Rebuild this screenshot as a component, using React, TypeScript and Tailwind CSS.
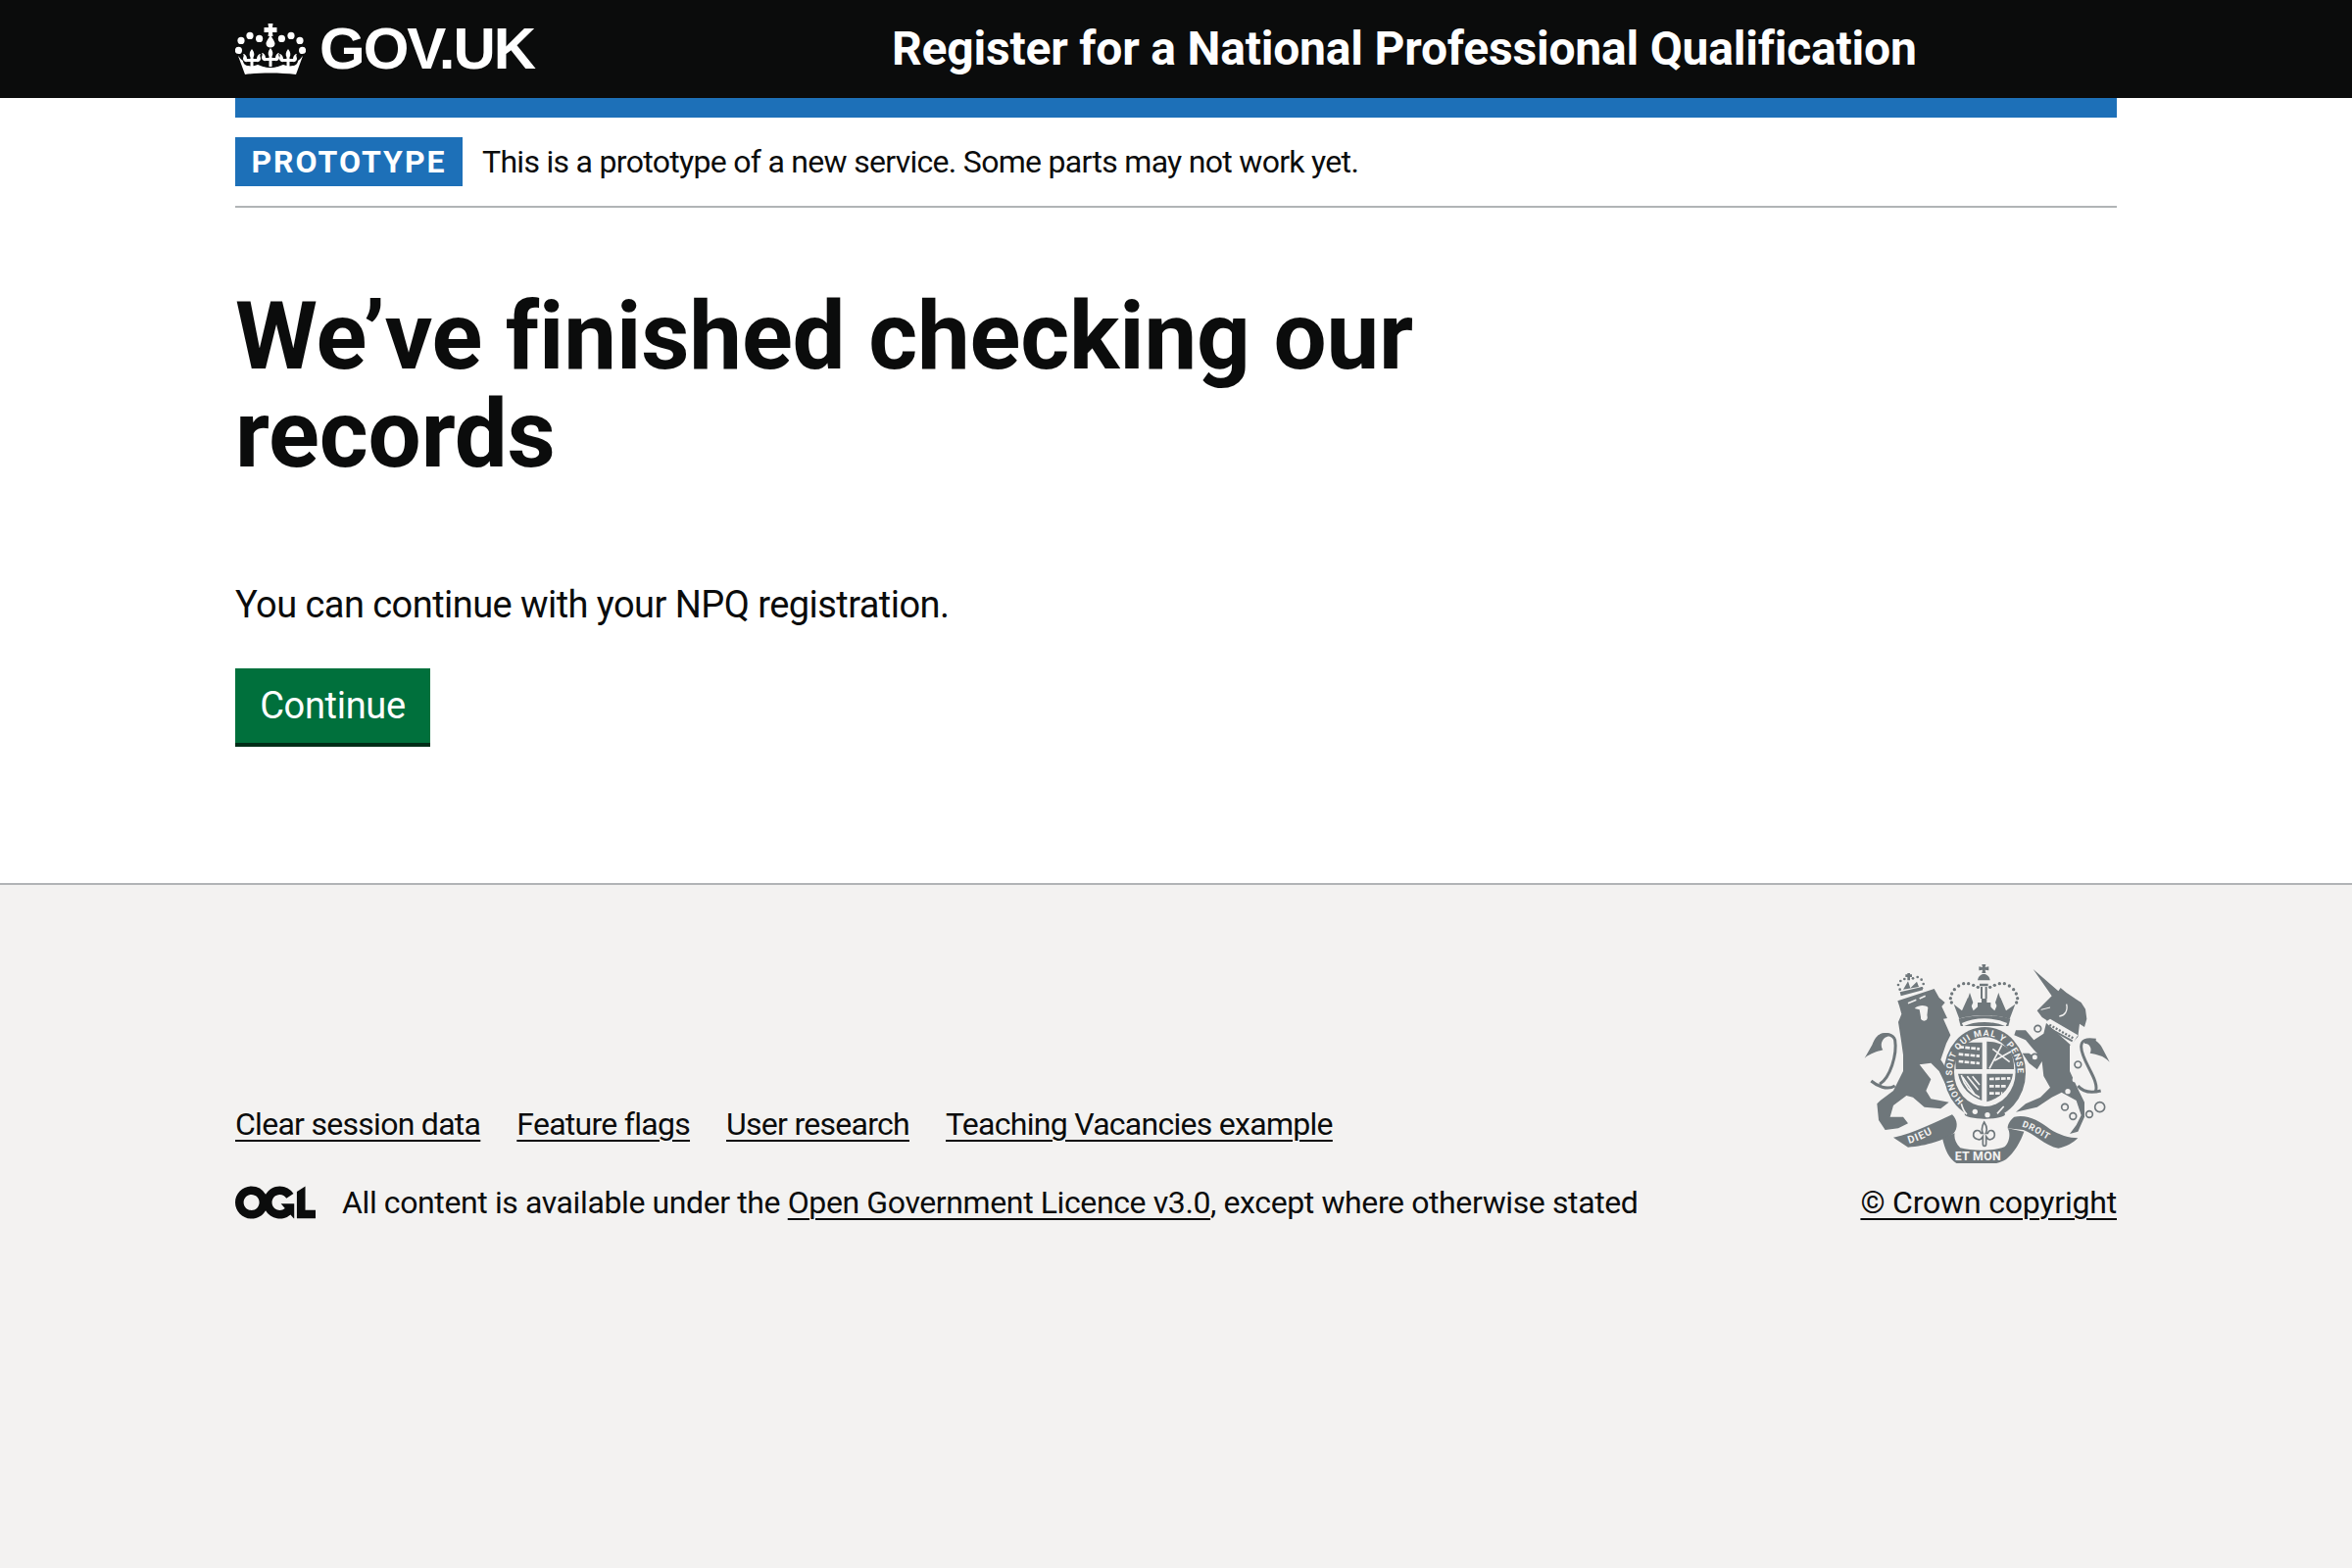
import React from 'react';

const Fleur = ({ x, y }: { x: number; y: number }) => (
  <path
    transform={`translate(${x} ${y})`}
    d="M0 -11 C2.5 -8 3 -5 1.5 -2.5 L1.5 -1 L5 -1 C5 -4 7 -6 9 -6 C7.5 -4 9 -3 9 -1 C9 1.5 6.5 2.5 4.5 2 L1.5 2 L1.5 8 L-1.5 8 L-1.5 2 L-4.5 2 C-6.5 2.5 -9 1.5 -9 -1 C-9 -3 -7.5 -4 -9 -6 C-7 -6 -5 -4 -5 -1 L-1.5 -1 L-1.5 -2.5 C-3 -5 -2.5 -8 0 -11 Z"
  />
);

const CrownLogo = () => (
  <svg width="72" height="52" viewBox="0 0 72 52" fill="currentColor" aria-hidden="true">
    {[[3.4, 27.4], [6, 17.4], [15, 12.4], [24.6, 15.4], [47.4, 15.4], [57, 12.4], [66, 17.4], [68.6, 27.4]].map(([cx, cy]) => (
      <circle key={`${cx}-${cy}`} cx={cx} cy={cy} r="3.6" />
    ))}
    {/* cross and drop */}
    <path d="M33.5 0H38.5L38 4H42.5V9H38L38.5 13H33.5L34 9H29.5V4H34Z" />
    <path d="M36 11 C37 14 40.5 18 40.5 20.5 C40.5 23 38.5 24.5 36 24.5 C33.5 24.5 31.5 23 31.5 20.5 C31.5 18 35 14 36 11 Z" />
    <Fleur x={17} y={37} />
    <Fleur x={36} y={36} />
    <Fleur x={54} y={37} />
    {/* band */}
    <path d="M3 33 C5 35 6 37 8 38 C8 41 11 43 13 43 C17 44 20 43 23 42 C27 43 29 45 36 45 C43 45 45 43 49 42 C52 43 55 44 59 43 C61 43 64 41 64 38 C66 37 67 35 69 33 L62 52 C46 50 26 50 10 52 Z" />
  </svg>
);

const OglLogo = () => (
  <svg width="82" height="34" viewBox="0 0 483.2 195.7" fill="currentColor" aria-hidden="true">
    <path d="M421.5 142.8V.1l-50.7 32.3v161.1h112.4v-50.7zm-122.3-9.6A47.12 47.12 0 0 1 221 97.8c0-26 21.1-47.1 47.1-47.1 16.7 0 31.4 8.7 39.7 21.8l42.7-27.2A97.63 97.63 0 0 0 268.1 0c-36.5 0-68.3 20.1-85.1 49.7A98 98 0 0 0 97.8 0C43.9 0 0 43.9 0 97.8s43.9 97.8 97.8 97.8c36.5 0 68.3-20.1 85.1-49.7a97.76 97.76 0 0 0 149.6 25.4l19.4 22.2h3v-87.8h-80l24.3 27.5zM97.8 145c-26 0-47.1-21.1-47.1-47.1s21.1-47.1 47.1-47.1 47.2 21 47.2 47S123.8 145 97.8 145" />
  </svg>
);

// coat of arms, coordinates follow a 3x crop of the picture
const RoyalArms = () => {
  const dark = '#6f777b';
  const light = '#f3f2f1';
  return (
    <svg width="252" height="204" viewBox="70 70 756 612" fill={dark} aria-hidden="true">
      <defs>
        <path id="garter-ring" d="M375 491 A100 113 0 1 1 505 491" />
        <path id="ribbon-left" d="M208 622 C245 612 285 590 322 566" />
        <path id="ribbon-right" d="M553 570 C585 578 620 605 655 622" />
      </defs>

      {/* lion */}
      <path d="M173 185 L285 148 L300 175 L318 190 L308 202 L325 238 L313 240 L335 290 L322 315 L305 365 L340 420 L345 455 L325 452 L300 400 L275 375 L240 380 L275 425 L260 460 L275 485 L330 495 L305 515 L255 510 L220 480 L200 475 L160 505 L150 540 L190 540 L205 560 L175 575 L135 580 L115 550 L110 500 L120 490 L160 460 L190 400 L190 350 L183 300 L175 250 L185 225 L178 200 Z" />
      <path d="M205 192 L230 182 M258 170 L240 178" stroke={light} strokeWidth="5" fill="none" />
      <path d="M225 208 C240 196 258 198 266 205 L262 240 L245 240 L240 212 Z" fill={light} />
      <circle cx="254" cy="236" r="10" fill={light} />
      <path d="M165 445 C140 460 110 445 92 430" fill="none" stroke={dark} strokeWidth="9" />
      <path d="M118 440 C150 420 172 350 165 305 C160 285 130 283 115 295" fill="none" stroke={dark} strokeWidth="9" />
      <path d="M155 287 C125 275 105 290 95 320 L72 360 C90 345 110 340 128 335 C118 320 125 300 140 295 Z" />
      {/* lion crown */}
      {[[180, 150], [175, 136], [182, 124], [194, 118], [220, 116], [234, 112], [246, 120], [252, 133], [247, 146]].map(([cx, cy]) => (
        <circle key={`${cx}-${cy}`} cx={cx} cy={cy} r="4" />
      ))}
      <path d="M203 100 H211 V104 H217 V112 H211 V122 H203 V112 H197 V104 H203 Z" />
      <path d="M190 150 L205 125 L212 146 L232 126 L238 142 Z" />
      <path d="M180 158 L248 142 L250 152 L183 170 Z" />

      {/* unicorn */}
      <path d="M588 88 L665 155 L672 145 L690 160 L720 180 L735 190 L748 210 L752 240 L745 265 L730 255 L725 295 L700 322 L700 400 L725 455 L745 495 L745 540 L725 585 L700 592 L720 565 L735 535 L720 490 L675 465 L645 480 L600 510 L535 525 L565 500 L610 480 L640 450 L620 415 L615 370 L600 395 L575 375 L555 345 L575 345 L590 355 L600 345 L590 335 L565 305 L530 290 L535 275 L565 275 L590 305 L620 285 L630 245 L615 235 L600 215 L645 170 Z" />
      <path d="M690 195 C695 215 685 230 668 232" fill="none" stroke={light} strokeWidth="4" />
      <path d="M612 212 L640 205" stroke={light} strokeWidth="3" />
      <path d="M625 250 L640 240 L725 290 L705 322 Z" fill={light} />
      <path d="M638 258 L712 300" stroke={dark} strokeWidth="7" strokeDasharray="6 5" />
      <path d="M636 268 L708 308" stroke={dark} strokeWidth="6" />
      {[[602, 270, 10], [593, 357, 10], [725, 380, 10], [685, 510, 10], [710, 538, 10], [760, 532, 10], [792, 510, 15]].map(([cx, cy, r]) => (
        <circle key={cx} cx={cx} cy={cy} r={r} fill={light} stroke={dark} strokeWidth="5" />
      ))}
      <circle cx="716" cy="426" r="8" fill={light} />
      <circle cx="694" cy="462" r="8" fill={light} />
      <path d="M725 445 C745 470 775 465 795 460" fill="none" stroke={dark} strokeWidth="9" />
      <path d="M778 465 C795 430 735 370 735 325 C735 305 750 300 780 305" fill="none" stroke={dark} strokeWidth="9" />
      <path d="M745 305 C770 295 790 310 800 330 L822 372 C800 350 785 350 762 345 C770 330 760 315 745 315 Z" />

      {/* royal crown */}
      <path d="M431 73 H443 L441 82 L452 80 V92 L441 90 L443 100 H431 L433 90 L422 92 V80 L433 82 Z" />
      <path d="M418 122 C420 108 430 103 437 103 C444 103 454 108 456 122 Z" />
      <path d="M427 142 H433 V178 H427 Z M441 142 H447 V178 H441 Z M424 132 H450 V140 H424 Z" />
      {[[338, 190], [335, 177], [339, 163], [347, 150], [360, 139], [375, 132], [390, 132], [405, 137], [419, 143], [456, 143], [470, 137], [485, 132], [500, 132], [515, 139], [528, 150], [536, 163], [540, 177], [537, 190]].map(([cx, cy]) => (
        <circle key={`${cx}-${cy}`} cx={cx} cy={cy} r="5" />
      ))}
      <path d="M345 195 L362 240 C400 225 478 225 516 240 L533 195 L505 215 L488 175 L470 215 L438 185 L405 215 L388 175 L370 215 Z" />
      <path d="M394 160 L404 190 L394 212 L384 190 Z M482 160 L492 190 L482 212 L472 190 Z" />
      <path d="M430 178 H446 V190 H458 V206 H446 V218 H430 V206 H418 V190 H430 Z" />
      <path d="M360 240 C400 226 478 226 518 240 L512 262 L366 262 Z" />
      <path d="M372 258 C410 240 468 240 506 258" fill="none" stroke={light} strokeWidth="11" />

      {/* garter and shield */}
      <ellipse cx="440" cy="405" rx="125" ry="140" />
      <ellipse cx="440" cy="402" rx="94" ry="106" fill={light} />
      <path d="M354 312 H432 V394 H351 C349 365 350 335 354 312 Z" />
      <path d="M446 309 C480 310 510 322 520 345 C528 362 530 380 529 394 H446 Z" />
      <path d="M358 408 H431 V490 C396 478 366 450 358 408 Z" />
      <path d="M446 408 H526 C520 450 490 482 446 494 Z" />
      <path d="M362 326 L424 332 M360 348 L424 354 M360 370 L424 376" stroke={light} strokeWidth="8" fill="none" strokeDasharray="14 4" />
      <path d="M454 392 L492 320 M464 332 L516 372 M470 368 L520 340" stroke={light} strokeWidth="5" fill="none" />
      <path d="M454 424 L518 422 M454 446 L508 446 M454 468 L494 468" stroke={light} strokeWidth="8" fill="none" strokeDasharray="14 4" />
      <path d="M372 418 L408 470 M386 416 L420 458 M402 416 L424 442" stroke={light} strokeWidth="5" fill="none" />
      <path d="M368 412 C378 448 396 468 424 480" stroke={light} strokeWidth="5" fill="none" />
      <text fontSize="27" fontWeight="700" fill={light} letterSpacing="3">
        <textPath href="#garter-ring">HONI SOIT QUI MAL Y PENSE</textPath>
      </text>
      <ellipse cx="440" cy="532" rx="62" ry="14" />
      <circle cx="410" cy="524" r="8" fill={light} />
      <circle cx="448" cy="534" r="8" fill={light} />
      <path d="M368 500 C372 515 376 525 385 532 M498 508 L478 530" stroke={light} strokeWidth="5" fill="none" />

      {/* ribbon */}
      <path d="M160 603 C225 590 290 555 340 533 C358 550 358 575 345 590 C320 610 260 630 205 633 Z" />
      <path d="M530 540 C570 532 605 550 640 578 C665 595 700 605 725 605 C710 620 690 632 665 636 C625 630 590 590 558 580 L510 575 C510 560 520 548 530 540 Z" />
      <path d="M310 605 C318 640 330 670 355 683 C400 692 470 692 505 670 C530 650 550 615 560 585 L510 575 C520 590 515 620 500 632 C470 645 400 645 365 635 C350 620 345 605 348 590 Z" />
      <path d="M438 556 C446 568 449 578 443 590 L449 590 C453 578 470 578 470 596 C470 606 458 612 450 608 L444 600 L444 622 C444 632 434 632 434 622 L434 600 L428 608 C420 612 405 606 405 596 C405 578 424 578 428 590 L434 590 C428 578 431 568 438 556 Z" fill={light} stroke={dark} strokeWidth="5" />
      <text fontSize="32" fontWeight="700" fill={light} letterSpacing="3">
        <textPath href="#ribbon-left">DIEU</textPath>
      </text>
      <text x="348" y="674" fontSize="37" fontWeight="700" fill={light} letterSpacing="1">ET MON</text>
      <text fontSize="28" fontWeight="700" fill={light} letterSpacing="2">
        <textPath href="#ribbon-right">DROIT</textPath>
      </text>
    </svg>
  );
};

const footerLinks = ['Clear session data', 'Feature flags', 'User research', 'Teaching Vacancies example'];

const linkClass = 'underline decoration-2 underline-offset-[5px]';

export default function App() {
  return (
    <div className="font-['Roboto',sans-serif] [font-variant-ligatures:none] min-h-[1600px] flex flex-col bg-white text-[#0b0c0c]">
      <header className="bg-[#0b0c0c] text-white">
        <div className="mx-[240px] h-[100px] flex items-center">
          <div className="w-[670px] flex items-center gap-[14px]">
            <CrownLogo />
            <span className="text-[60px] leading-[60px] font-bold tracking-[-2px] font-['Liberation_Sans',sans-serif]">GOV.UK</span>
          </div>
          <span className="text-[48px] leading-[50px] font-bold tracking-[-0.2px]">Register for a National Professional Qualification</span>
        </div>
      </header>

      <div className="mx-[240px] h-[20px] bg-[#1d70b8]" />

      <div className="mx-[240px] pt-[20px] pb-[20px] border-b-2 border-[#b1b4b6] flex items-center gap-[20px]">
        <strong className="h-[50px] w-[232px] text-center bg-[#1d70b8] text-white text-[32px] leading-[50px] font-bold tracking-[2px]">PROTOTYPE</strong>
        <span className="text-[32px] leading-[40px] tracking-[-0.7px]">This is a prototype of a new service. Some parts may not work yet.</span>
      </div>

      <main className="mx-[240px] pt-[81px] h-[689px]">
        <h1 className="w-[1270px] text-[96px] leading-[100px] font-bold tracking-[-0.17px]">We’ve finished checking our records</h1>
        <p className="mt-[99px] text-[38px] leading-[50px] tracking-[-0.55px]">You can continue with your NPQ registration.</p>
        <button className="mt-[40px] h-[76px] w-[199px] bg-[#00703c] text-white text-[38px] leading-[50px] tracking-[-0.3px] shadow-[0_4px_0_#002d18]">Continue</button>
      </main>

      <footer className="flex-1 bg-[#f3f2f1] border-t-2 border-[#b1b4b6]">
        <div className="mx-[240px] pt-[80px] flex items-end justify-between">
          <div>
            <ul className="flex gap-[37px] mb-[40px] text-[32px] leading-[40px] tracking-[-0.72px]">
              {footerLinks.map(link => (
                <li key={link}><a className={linkClass} href="#">{link}</a></li>
              ))}
            </ul>
            <div className="flex items-center gap-[27px] text-[32px] leading-[40px] tracking-[-0.39px]">
              <OglLogo />
              <span>
                All content is available under the <a className={linkClass} href="#">Open Government Licence v3.0</a>, except where otherwise stated
              </span>
            </div>
          </div>
          <div className="flex flex-col items-end gap-[20px]">
            <div className="mr-[6px]"><RoyalArms /></div>
            <a className={`${linkClass} text-[32px] leading-[40px] tracking-[-0.2px]`} href="#">© Crown copyright</a>
          </div>
        </div>
      </footer>
    </div>
  );
}
